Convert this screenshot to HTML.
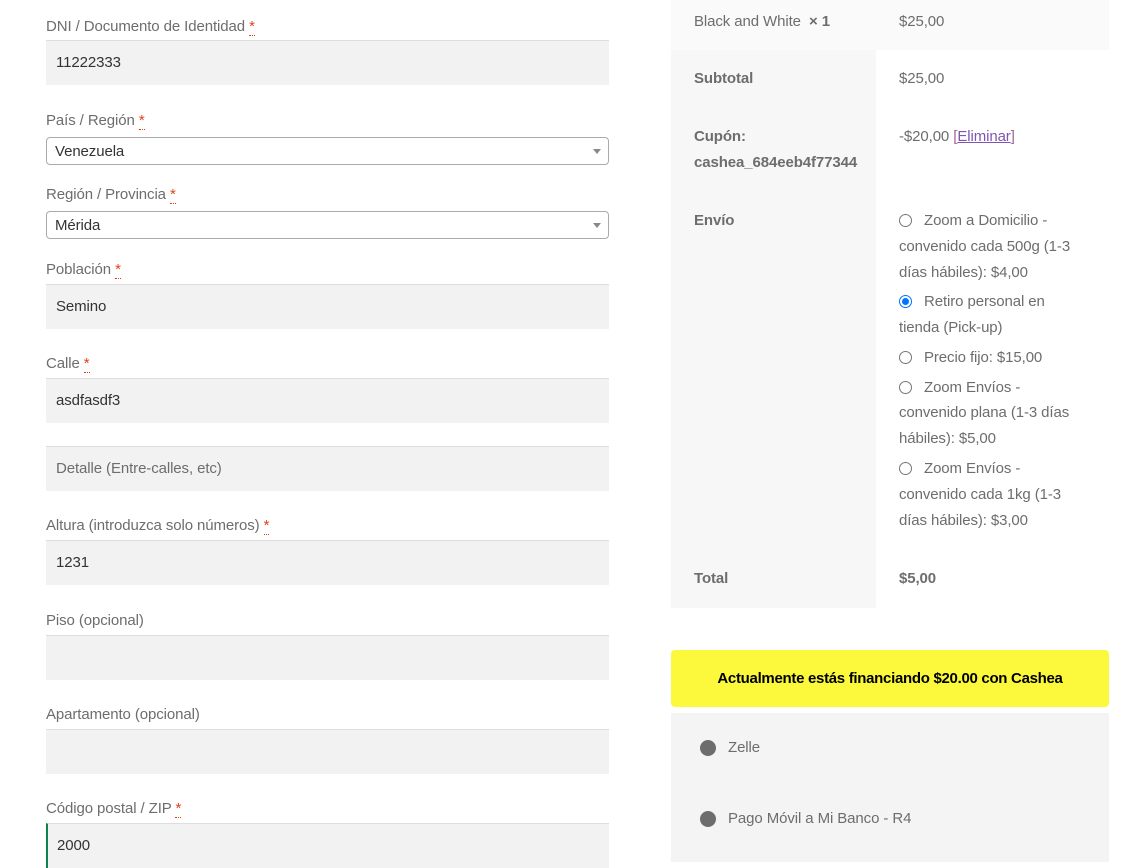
<!DOCTYPE html>
<html><head><meta charset="utf-8"><style>
*{margin:0;padding:0;box-sizing:border-box}
body{width:1128px;height:862px;overflow:hidden;background:#fff;font-family:"Liberation Sans",sans-serif;font-size:15px;color:#6d6d6d;position:relative;letter-spacing:-0.1px}
.a{position:absolute;white-space:nowrap;line-height:18px}
.lbl{left:46px}
.lbl i{font-style:normal;color:#e2401c;border-bottom:1px dotted #e2401c;text-decoration:none}
.inp{position:absolute;left:46px;width:563px;height:45px;background:#f2f2f2;border-top:1px solid #ddd;color:#333;padding:13px 10px;line-height:18px}
.sel{position:absolute;left:46px;width:563px;height:28px;background:#fff;border:1px solid #aaa;border-radius:4px;color:#333;padding:5px 8px;line-height:17px}
.sel:after{content:"";position:absolute;right:7px;top:11px;border:4px solid transparent;border-top:5px solid #888}
.b{font-weight:bold}
.r{position:absolute;width:13px;height:13px;border:1px solid #767676;border-radius:50%;background:#fff}
.r.on{border:1px solid #0075ff}
.r.on:after{content:"";position:absolute;left:2px;top:2px;width:7px;height:7px;border-radius:50%;background:#0075ff}
</style></head><body>
<div class="a lbl" style="top:18px">DNI / Documento de Identidad <i>*</i></div>
<div class="inp" style="top:40px">11222333</div>
<div class="a lbl" style="top:112px">País / Región <i>*</i></div>
<div class="sel" style="top:137px">Venezuela</div>
<div class="a lbl" style="top:186px">Región / Provincia <i>*</i></div>
<div class="sel" style="top:211px">Mérida</div>
<div class="a lbl" style="top:261px">Población <i>*</i></div>
<div class="inp" style="top:284px">Semino</div>
<div class="a lbl" style="top:355px">Calle <i>*</i></div>
<div class="inp" style="top:378px">asdfasdf3</div>
<div class="inp" style="top:446px;color:#6d6d6d">Detalle (Entre-calles, etc)</div>
<div class="a lbl" style="top:517px">Altura (introduzca solo números) <i>*</i></div>
<div class="inp" style="top:540px">1231</div>
<div class="a lbl" style="top:612px">Piso (opcional)</div>
<div class="inp" style="top:635px"></div>
<div class="a lbl" style="top:706px">Apartamento (opcional)</div>
<div class="inp" style="top:729px"></div>
<div class="a lbl" style="top:800px">Código postal / ZIP <i>*</i></div>
<div class="inp" style="top:823px;border-left:2px solid #0f834d;padding-left:9px">2000</div>

<div style="position:absolute;left:671px;top:0;width:438px;height:50px;background:#fafafa"></div>
<div style="position:absolute;left:671px;top:50px;width:205px;height:558px;background:#f7f7f7"></div>
<div class="a" style="left:694px;top:13px">Black and White &nbsp;<b>× 1</b></div>
<div class="a" style="left:899px;top:13px">$25,00</div>
<div class="a b" style="left:694px;top:70px">Subtotal</div>
<div class="a" style="left:899px;top:70px">$25,00</div>
<div class="a b" style="left:694px;top:128px">Cupón:</div>
<div class="a b" style="left:694px;top:154px">cashea_684eeb4f77344</div>
<div class="a" style="left:899px;top:128px">-$20,00 <span style="color:#a46497">[<u style="color:#7f54b3">Eliminar</u>]</span></div>
<div class="a b" style="left:694px;top:212px">Envío</div>
<div class="r" style="left:899px;top:214px"></div>
<div class="a" style="left:924px;top:212px">Zoom a Domicilio -</div>
<div class="a" style="left:899px;top:238px">convenido cada 500g (1-3</div>
<div class="a" style="left:899px;top:264px">días hábiles): $4,00</div>
<div class="r on" style="left:899px;top:295px"></div>
<div class="a" style="left:924px;top:293px">Retiro personal en</div>
<div class="a" style="left:899px;top:319px">tienda (Pick-up)</div>
<div class="r" style="left:899px;top:351px"></div>
<div class="a" style="left:924px;top:349px">Precio fijo: $15,00</div>
<div class="r" style="left:899px;top:381px"></div>
<div class="a" style="left:924px;top:379px">Zoom Envíos -</div>
<div class="a" style="left:899px;top:404px">convenido plana (1-3 días</div>
<div class="a" style="left:899px;top:430px">hábiles): $5,00</div>
<div class="r" style="left:899px;top:462px"></div>
<div class="a" style="left:924px;top:460px">Zoom Envíos -</div>
<div class="a" style="left:899px;top:486px">convenido cada 1kg (1-3</div>
<div class="a" style="left:899px;top:512px">días hábiles): $3,00</div>
<div class="a b" style="left:694px;top:570px">Total</div>
<div class="a b" style="left:899px;top:570px">$5,00</div>

<div style="position:absolute;left:671px;top:650px;width:438px;height:57px;background:#fcf93c;border-radius:4px;color:#000;font-weight:bold;text-align:center;line-height:57px;letter-spacing:-0.3px">Actualmente estás financiando $20.00 con Cashea</div>
<div style="position:absolute;left:671px;top:713px;width:438px;height:149px;background:#f4f4f4"></div>
<div style="position:absolute;left:700px;top:740px;width:16px;height:16px;border-radius:50%;background:#6d6d6d"></div>
<div class="a" style="left:728px;top:739px">Zelle</div>
<div style="position:absolute;left:700px;top:811px;width:16px;height:16px;border-radius:50%;background:#6d6d6d"></div>
<div class="a" style="left:728px;top:810px">Pago Móvil a Mi Banco - R4</div>
</body></html>
